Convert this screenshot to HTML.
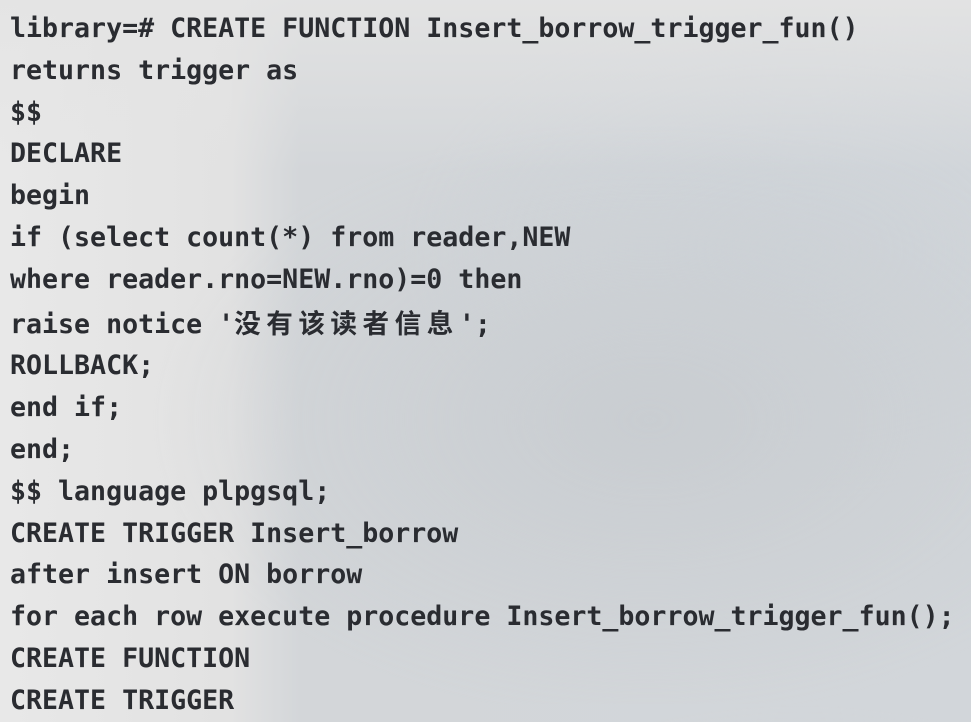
<!DOCTYPE html>
<html><head><meta charset="utf-8"><style>
html,body{margin:0;padding:0;}
body{width:971px;height:704px;overflow:hidden;position:relative;
background:
radial-gradient(ellipse 500px 300px at 650px 420px, #c9cdd1 0%, rgba(201,205,209,0) 100%),
radial-gradient(ellipse 400px 250px at 800px 250px, #cfd4d9 0%, rgba(207,212,217,0) 100%),
linear-gradient(90deg,#e8e8e8 0px,#e2e2e2 230px,#d3d6d9 300px,#d2d6da 971px);}
.top{position:absolute;left:0;top:0;width:971px;height:170px;background:linear-gradient(180deg,rgba(228,228,228,0.9),rgba(228,228,228,0));}
pre{position:absolute;left:10px;top:8px;margin:0;font-family:"DejaVu Sans Mono","Liberation Mono","Noto Sans CJK SC",monospace;font-weight:bold;font-size:26.6px;line-height:41.8px;color:#2a2c31;}
.c{font-family:"Noto Sans CJK SC",sans-serif;letter-spacing:5.5px;}
</style></head><body><div class="top"></div>
<pre>library=# CREATE FUNCTION Insert_borrow_trigger_fun()
returns trigger as
$$
DECLARE
begin
if (select count(*) from reader,NEW
where reader.rno=NEW.rno)=0 then
raise notice '<span class="c">没有该读者信息</span>';
ROLLBACK;
end if;
end;
$$ language plpgsql;
CREATE TRIGGER Insert_borrow
after insert ON borrow
for each row execute procedure Insert_borrow_trigger_fun();
CREATE FUNCTION
CREATE TRIGGER</pre>
</body></html>
